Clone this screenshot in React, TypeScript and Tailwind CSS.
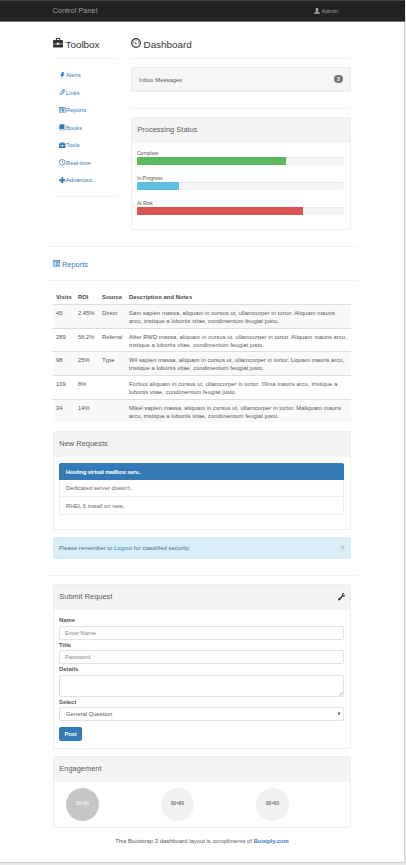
import React from 'react';

type IconName = 'briefcase' | 'dashboard' | 'user' | 'flash' | 'link' | 'list' | 'book' | 'time' | 'plus' | 'wrench';

const glyphs: Record<IconName, React.ReactNode> = {
  briefcase: (
    <path fillRule="evenodd" d="M4.500 3V1.500Q4.500 0 6 0h4q1.500 0 1.500 1.500V3h3.300q1.200 0 1.200 1.200V9h-6V7.500H6V9H0V4.200Q0 3 1.200 3zm1.700 0h3.600V1.500H6.200zM0 9.800h6v1h4v-1h6V14q0 1-1 1H1q-1 0-1-1z" />
  ),
  dashboard: (
    <>
      <circle cx="8" cy="8" r="6.900" fill="none" stroke="currentColor" strokeWidth="1.900" />
      <path d="M7.300 9.500l-2-4 3.600 3q.5 2-1.600 1zM7.300 2.700h1.400v1.600H7.300zM4 4l1 1-1 1-1-1zM12 4l1 1-1 1-1-1zM2.700 7.300h1.400v1.400H2.700zM11.900 7.300h1.400v1.400h-1.400z" />
    </>
  ),
  user: (
    <path d="M8 0c2.600 0 4 1.600 4 4.300 0 1.900-.7 3.500-1.700 4.500v1.200l4.200 1.800Q16 12.500 16 14v1.500H0V14q0-1.500 1.500-2.200L5.700 10V8.800C4.700 7.800 4 6.200 4 4.300 4 1.600 5.400 0 8 0z" />
  ),
  flash: <path d="M8 0h4.500L9.800 5.500H14L4.500 16.500 7 9H3z" />,
  link: (
    <g fill="none" stroke="currentColor" strokeWidth="1.800">
      <path d="M6.500 11L11.500 6q1.500-1.500 0-2.500-1-.8-2.200.4L3.500 9.500q-2 2.200-.3 4 1.800 1.600 4-.5l6.300-6.300q2-2.300.2-4.500-2.200-1.900-4.500.2L7 4.600" />
    </g>
  ),
  list: (
    <path fillRule="evenodd" d="M0 .5h16v15H0zm1.300 3v10.700h13.400V3.500zM3 5h2.200v1.900H3zm3.500 0H13v1.900H6.500zM3 8h2.200v1.900H3zm3.500 0H13v1.900H6.500zM3 11h2.200v1.900H3zm3.500 0H13v1.900H6.500z" />
  ),
  book: <path d="M3.500.5H13v12H3.200q-1 0-1 .8t1 .7h11.300V1.500H15.500v14H3q-2 0-2-2V3q0-2.500 2.500-2.500z" />,
  time: (
    <g fill="none" stroke="currentColor" strokeWidth="1.800">
      <circle cx="8" cy="8" r="6.900" />
      <path d="M8 3.500V8l3 2.500" />
    </g>
  ),
  plus: <path d="M5.700.5h4.600v5.200h5.200v4.600h-5.200v5.200H5.700v-5.200H.5V5.700h5.200z" />,
  wrench: (
    <path d="M15.700 3.200l-2.800 2.100-1.900-.7-.2-1.900L13.500.3C10.800-.2 8.600 1.200 8.300 3.500c-.1.900 0 1.500.1 2.100L.9 12c-1.100 1-1.100 2.200 0 3.200s2.200.8 3.100-.2l6.300-7.400c2.900.9 6-1 5.400-4.400z" />
  ),
};

function Icon({ name, className }: { name: IconName; className: string }) {
  return (
    <svg viewBox="0 0 16 16" fill="currentColor" className={`shrink-0 ${className}`}>
      {glyphs[name]}
    </svg>
  );
}

const links: { icon: IconName; label: string }[] = [
  { icon: 'flash', label: 'Alerts' },
  { icon: 'link', label: 'Links' },
  { icon: 'list', label: 'Reports' },
  { icon: 'book', label: 'Books' },
  { icon: 'briefcase', label: 'Tools' },
  { icon: 'time', label: 'Real-time' },
  { icon: 'plus', label: 'Advanced..' },
];

const rows = [
  ['45', '2.45%', 'Direct', 'Sam sapien massa, aliquam in cursus ut, ullamcorper in tortor. Aliquam mauris', 'arcu, tristique a lobortis vitae, condimentum feugiat justo.'],
  ['289', '56.2%', 'Referral', 'After RWD massa, aliquam in cursus ut, ullamcorper in tortor. Aliquam mauris arcu,', 'tristique a lobortis vitae, condimentum feugiat justo.'],
  ['98', '25%', 'Type', 'Wil sapien massa, aliquam in cursus ut, ullamcorper in tortor. Liquam mauris arcu,', 'tristique a lobortis vitae, condimentum feugiat justo.'],
  ['109', '8%', '', 'Forfoot aliquam in cursus ut, ullamcorper in tortor. Olma mauris arcu, tristique a', 'lobortis vitae, condimentum feugiat justo.'],
  ['34', '14%', '', 'Mikel sapien massa, aliquam in cursus ut, ullamcorper in tortor. Maliquam mauris', 'arcu, tristique a lobortis vitae, condimentum feugiat justo.'],
];

const progress = [
  { label: 'Complete', fill: 'w-[149px] bg-[#5cb85c]' },
  { label: 'In Progress', fill: 'w-[42px] bg-[#5bc0de]' },
  { label: 'At Risk', fill: 'w-[166px] bg-[#d9534f]' },
];

function Panel({ title, className, icon, children }: { title: string; className: string; icon?: IconName; children: React.ReactNode }) {
  return (
    <section className={`rounded-[2px] border border-[#eeeeee] ${className}`}>
      <div className="flex h-[25px] items-center justify-between bg-[#f4f4f4] pr-[5px] pb-px pl-[5.3px] text-[7.4px] tracking-[0.04px] text-[#5a5a5a]">
        <h4>{title}</h4>
        {icon && <Icon name={icon} className="size-[7.5px] text-[#333]" />}
      </div>
      {children}
    </section>
  );
}

function Field({ label, children }: { label: string; children: React.ReactNode }) {
  return (
    <div>
      <div className="flex h-[10.6px] items-center font-bold tracking-[0.05px]">{label}</div>
      {children}
    </div>
  );
}

export default function App() {
  return (
    <div className="h-[865px] w-[406px] overflow-hidden bg-[#e9e9e9] font-['Liberation_Sans',Arial,sans-serif] text-[5.8px] leading-[8px] whitespace-nowrap text-[#555]">
      <div className="h-[863px] w-[405px] border-r border-b border-[#d2d2d2] bg-white">
        <header className="-mr-px flex h-[22px] items-center justify-between border-t border-b border-t-[#444] border-b-[#777] bg-[#222] pr-[67px] pl-[52.500px] text-[#9d9d9d]">
          <span className="text-[7.4px]">Control Panel</span>
          <span className="flex items-center gap-[1.5px]">
            <Icon name="user" className="mb-px size-[6px]" />
            Admin
          </span>
        </header>

        <div className="flex h-[224px] gap-[13px] pr-[53px] pl-[53px]">
          <aside className="w-[65px]">
            <h3 className="flex h-[37px] items-center gap-[2.500px] border-b border-[#f3f3f3] pt-[9px] text-[9.9px] text-[#333]">
              <Icon name="briefcase" className="mb-[3px] size-[10px]" />
              Toolbox
            </h3>
            <ul className="mt-[7.5px] pl-[6px] text-[#337ab7]">
              {links.map((l) => (
                <li key={l.label} className="flex h-[17.5px] items-center gap-[0.500px]">
                  <Icon name={l.icon} className="mb-px size-[6.500px]" />
                  {l.label}
                </li>
              ))}
            </ul>
            <div className="mt-[7px] border-t border-[#f3f3f3]" />
          </aside>
          <main className="w-[220px]">
            <h3 className="flex h-[37px] items-center gap-[2.500px] border-b border-[#f3f3f3] pt-[9px] text-[9.9px] text-[#333]">
              <Icon name="dashboard" className="mb-[3px] size-[10px]" />
              Dashboard
            </h3>
            <div className="mt-[8px] flex h-[25px] items-center justify-between rounded-[2px] border border-[#ebebeb] bg-[#f5f5f5] pr-[7px] pl-[7px] tracking-[0.08px]">
              Inbox Messages
              <span className="mb-px flex h-[8px] w-[9px] items-center justify-center rounded-full bg-[#777] text-[5px] font-bold text-white">3</span>
            </div>
            <div className="mt-[16px] border-t border-[#f3f3f3]" />
            <Panel title="Processing Status" className="mt-[8px] h-[113px]">
              <div className="pt-[6px] pl-[5px] text-[5px]">
                {progress.map((p) => (
                  <div key={p.label} className="h-[25px]">
                    <div className="h-[8px] leading-[8px]">{p.label}</div>
                    <div className="h-[8px] w-[207px] overflow-hidden rounded-[1px] bg-[#f5f5f5] shadow-[inset_0_1px_0_#e9e9e9]">
                      <div className={`h-full ${p.fill}`} />
                    </div>
                  </div>
                ))}
              </div>
            </Panel>
          </main>
        </div>

        <div className="mr-[46px] ml-[47px] border-t border-[#f3f3f3]" />
        <h4 className="mr-[46px] ml-[47px] flex h-[34px] items-center gap-[2px] border-b border-[#f3f3f3] pt-[2px] pl-[6px] text-[7.4px] text-[#337ab7]">
          <Icon name="list" className="mb-[2px] size-[7px]" />
          Reports
        </h4>

        <div className="mt-[8px] ml-[53px] w-[298px]">
          <div className="grid h-[15px] grid-cols-[22px_24px_27px_1fr] items-center pl-[3px] font-bold tracking-[0.08px] text-[#444]">
            <span>Visits</span>
            <span>ROI</span>
            <span>Source</span>
            <span>Description and Notes</span>
          </div>
          {rows.map((r, i) => (
            <div key={r[0]} className={`grid h-[23.7px] grid-cols-[22px_24px_27px_1fr] border-t border-[#dddddd] pt-[4px] pl-[3px] ${i % 2 ? '' : 'bg-[#f9f9f9]'}`}>
              <span>{r[0]}</span>
              <span>{r[1]}</span>
              <span>{r[2]}</span>
              <span className="tracking-[0.06px]">
                {r[3]}
                <br />
                {r[4]}
              </span>
            </div>
          ))}
        </div>

        <div className="mt-[8.5px] ml-[53px] w-[298px]">
          <Panel title="New Requests" className="h-[99px]">
            <ul className="mr-[6px] ml-[5px] mt-[6px] h-[52px] rounded-[2px] border border-[#eeeeee]">
              <li className="-mx-px -mt-px flex h-[17.500px] items-center rounded-t-[2px] bg-[#337ab7] pl-[7px] font-bold tracking-[-0.19px] text-white">Hosting virtual mailbox serv..</li>
              <li className="flex h-[17px] items-center border-b border-[#eeeeee] pl-[6px] text-[#666]">Dedicated server doesn't..</li>
              <li className="flex h-[17px] items-center pl-[6px] text-[#666]">RHEL 6 install on new..</li>
            </ul>
          </Panel>
          <div className="mt-[7px] flex h-[22px] items-center justify-between rounded-[2px] bg-[#d9edf7] pr-[6px] pl-[6px] tracking-[0.06px] text-[#31708f]">
            <span>
              Please remember to <a className="text-[#337ab7]">Logout</a> for classified security.
            </span>
            <span className="text-[8px] font-bold text-[#aec3cd]">×</span>
          </div>
        </div>

        <div className="mt-[16px] mr-[46px] ml-[47px] border-t border-[#f3f3f3]" />

        <div className="mt-[8px] ml-[53px] w-[298px]">
          <Panel title="Submit Request" icon="wrench" className="h-[165px]">
            <div className="pt-[5px] pr-[6px] pl-[5px]">
              <Field label="Name">
                <div className="flex h-[14px] items-center rounded-[2px] border border-[#e2e2e2] pl-[5px] text-[#888]">Enter Name</div>
              </Field>
              <Field label="Title">
                <div className="flex h-[14px] items-center rounded-[2px] border border-[#e2e2e2] pl-[5px] text-[#888]">Password</div>
              </Field>
              <Field label="Details">
                <div className="flex h-[22px] items-end justify-end rounded-[2px] border border-[#e2e2e2]">
                  <svg viewBox="0 0 5 5" className="size-[5px]" stroke="#999" strokeWidth=".7">
                    <path d="M1 4.500l3.500-3.500M3 4.500l1.500-1.500" />
                  </svg>
                </div>
              </Field>
              <Field label="Select">
                <div className="flex h-[14px] items-center justify-between rounded-[2px] border border-[#e2e2e2] pr-[2px] pl-[6px] tracking-[0.06px]">
                  General Question
                  <svg viewBox="0 0 4 4" className="size-[4px]" fill="#555">
                    <path d="M.5.500h3L2 3.500z" />
                  </svg>
                </div>
              </Field>
              <button className="mt-[6px] flex h-[14px] w-[23px] items-center justify-center rounded-[2px] bg-[#337ab7] font-bold tracking-[-0.1px] text-white">Post</button>
            </div>
          </Panel>
          <Panel title="Engagement" className="mt-[7px] h-[72px]">
            <div className="flex gap-[62px] pt-[6px] pl-[12px] text-[4.600px] font-bold">
              <div className="flex size-[33px] items-center justify-center rounded-full bg-[#c6c6c6] text-[#eee]">80×80</div>
              <div className="flex size-[33px] items-center justify-center rounded-full bg-[#f1f1f1] text-[#777]">80×80</div>
              <div className="flex size-[33px] items-center justify-center rounded-full bg-[#f1f1f1] text-[#777]">80×80</div>
            </div>
          </Panel>
          <footer className="mt-[9px] text-center tracking-[0.04px]">
            This Bootstrap 3 dashboard layout is compliments of <a className="font-bold text-[#337ab7]">Bootply.com</a>
          </footer>
        </div>
      </div>
    </div>
  );
}
